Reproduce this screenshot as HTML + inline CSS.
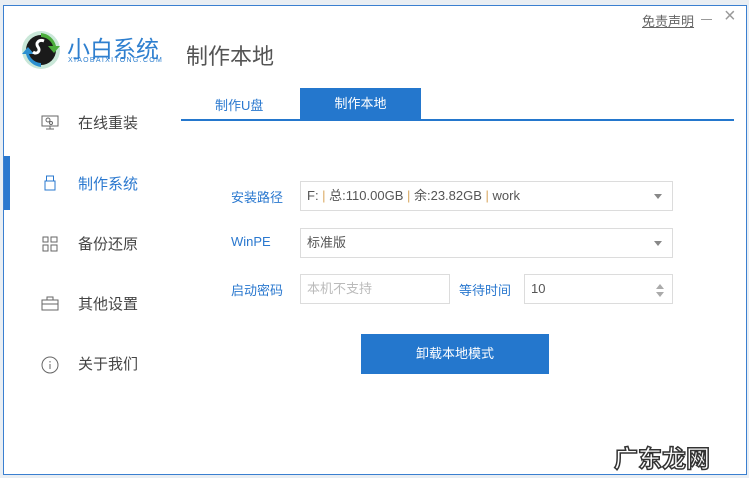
<!DOCTYPE html>
<html><head><meta charset="utf-8"><style>
*{margin:0;padding:0;box-sizing:border-box}
body{width:749px;height:478px;background:#e9eef3;position:relative;overflow:hidden;font-family:"Liberation Sans","Noto Sans CJK SC",sans-serif}
.win{position:absolute;left:3px;top:5px;width:744px;height:470px;background:#fff;border:1px solid #3a7fd0}
.a{position:absolute}
.nav{position:absolute;left:74px;font-size:15px;color:#444}
.lbl{position:absolute;font-size:13px;color:#2a78cf}
.box{position:absolute;border:1px solid #dcdcdc;background:#fff;font-size:13px;color:#555;padding-left:6px;line-height:28px;height:30px}
.tri{position:absolute;right:10px;top:12px;width:0;height:0;border-left:4px solid transparent;border-right:4px solid transparent;border-top:5px solid #888}
</style></head><body>
<div class="win">
  <svg class="a" style="left:16px;top:23px" width="42" height="42" viewBox="0 0 42 42">
    <circle cx="21" cy="21" r="19" fill="#c9e7d8"/>
    <circle cx="21" cy="21" r="15" fill="#1a1a1a"/>
    <path d="M21 8a13 13 0 0 1 12 9l-5 0l6 7l6-7l-4 0A17 17 0 0 0 21 4z" fill="#4cae3d"/>
    <path d="M21 34a13 13 0 0 1-12-9l5 0l-6-7l-6 7l4 0A17 17 0 0 0 21 38z" fill="#2c8fd0"/>
    <path d="M24 12c-5-2-9 2-6 6c3 4-1 8-5 5" stroke="#fff" stroke-width="3" fill="none"/>
  </svg>
  <div class="a" style="left:63px;top:24px;font-size:23px;color:#2e7fcf;letter-spacing:0px">小白系统</div>
  <div class="a" style="left:64px;top:51px;font-size:7px;color:#2e7fcf;letter-spacing:1.3px">XIAOBAIXITONG.COM</div>
  <div class="a" style="left:182px;top:33px;font-size:22px;color:#555">制作本地</div>
  <div class="a" style="left:638px;top:5px;font-size:13px;color:#666;text-decoration:underline">免责声明</div>
  <div class="a" style="left:697px;top:13px;width:11px;height:1px;background:#999"></div>
  <div class="a" style="left:720px;top:-1px;font-size:20px;color:#999">×</div>

  <div class="a" style="left:0;top:150px;width:6px;height:54px;background:#2a78cf"></div>
  <svg class="a" style="left:37px;top:109px" width="18" height="16" viewBox="0 0 18 16" fill="none" stroke="#666"><rect x="1" y="1" width="16" height="10"/><circle cx="7" cy="5" r="2"/><circle cx="10" cy="8" r="1.5"/><path d="M9 11v3M5 14h8"/></svg>
  <div class="nav" style="top:106px">在线重装</div>
  <svg class="a" style="left:40px;top:169px" width="12" height="16" viewBox="0 0 12 16" fill="none" stroke="#2a78cf"><rect x="2.5" y="1" width="7" height="5"/><rect x="1" y="6" width="10" height="9"/></svg>
  <div class="nav" style="top:167px;color:#2a78cf">制作系统</div>
  <svg class="a" style="left:38px;top:230px" width="16" height="16" viewBox="0 0 16 16" fill="none" stroke="#666"><rect x="1" y="1" width="5" height="5"/><rect x="9" y="1" width="6" height="5"/><rect x="1" y="9" width="5" height="6"/><rect x="9" y="9" width="6" height="6"/></svg>
  <div class="nav" style="top:227px">备份还原</div>
  <svg class="a" style="left:37px;top:290px" width="18" height="15" viewBox="0 0 18 15" fill="none" stroke="#666"><rect x="1" y="4" width="16" height="10"/><path d="M6 4V1h6v3M1 8h16"/></svg>
  <div class="nav" style="top:287px">其他设置</div>
  <svg class="a" style="left:37px;top:350px" width="18" height="18" viewBox="0 0 18 18" fill="none" stroke="#666"><circle cx="9" cy="9" r="8"/><path d="M9 8v5M9 5v1.5"/></svg>
  <div class="nav" style="top:347px">关于我们</div>

  <div class="a" style="left:211px;top:89px;font-size:13px;color:#2a78cf">制作U盘</div>
  <div class="a" style="left:296px;top:82px;width:121px;height:32px;background:#2477cd;color:#fff;font-size:13px;text-align:center;line-height:32px">制作本地</div>
  <div class="a" style="left:177px;top:113px;width:553px;height:2px;background:#2477cd"></div>

  <div class="lbl" style="left:227px;top:181px">安装路径</div>
  <div class="box" style="left:296px;top:175px;width:373px">F: <span style="color:#d9a860">|</span> 总:110.00GB <span style="color:#d9a860">|</span> 余:23.82GB <span style="color:#d9a860">|</span> work<div class="tri"></div></div>
  <div class="lbl" style="left:227px;top:228px">WinPE</div>
  <div class="box" style="left:296px;top:222px;width:373px">标准版<div class="tri"></div></div>
  <div class="lbl" style="left:227px;top:274px">启动密码</div>
  <div class="box" style="left:296px;top:268px;width:150px;color:#bbb">本机不支持</div>
  <div class="lbl" style="left:455px;top:274px">等待时间</div>
  <div class="box" style="left:520px;top:268px;width:149px">10
    <div style="position:absolute;right:8px;top:9px;border-left:4px solid transparent;border-right:4px solid transparent;border-bottom:5px solid #aaa"></div>
    <div style="position:absolute;right:8px;top:17px;border-left:4px solid transparent;border-right:4px solid transparent;border-top:5px solid #aaa"></div>
  </div>
  <div class="a" style="left:357px;top:328px;width:188px;height:40px;background:#2477cd;color:#fff;font-size:13px;text-align:center;line-height:40px">卸载本地模式</div>
  <div class="a" style="left:610px;top:433px;font-size:24px;font-weight:bold;color:#fff;-webkit-text-stroke:1.5px #333">广东龙网</div>
</div>
</body></html>
